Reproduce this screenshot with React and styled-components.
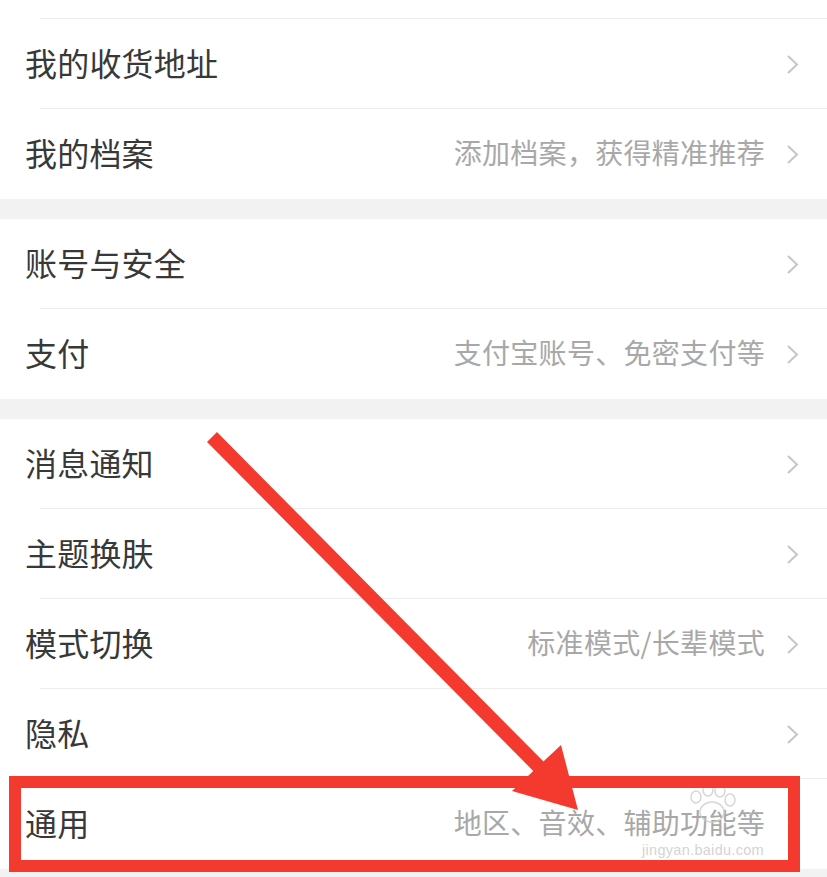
import React from "react";
import styled, { createGlobalStyle } from "styled-components";

const GlobalStyle = createGlobalStyle`
  html, body {
    margin: 0;
    padding: 0;
    background: #f2f2f2;
  }
  body {
    font-family: "Noto Sans CJK SC", "Noto Sans", sans-serif;
  }
`;

const Page = styled.div`
  position: relative;
  width: 827px;
  height: 877px;
  overflow: hidden;
  background: #f2f2f2;
  display: flex;
  flex-direction: column;
  gap: 20px;
`;

const Group = styled.div`
  background: #fff;
  display: flex;
  flex-direction: column;
`;

const TopStrip = styled.div`
  height: 18px;
  border-bottom: 1px solid #ececec;
  margin-left: 40px;
`;

const Row = styled.div`
  height: 90px;
  display: flex;
  align-items: center;
  padding: 0 28px 5px 25px;
  box-sizing: border-box;
  position: relative;

  &:not(:last-child)::after {
    content: "";
    position: absolute;
    left: 40px;
    right: 0;
    bottom: 0;
    height: 1px;
    background: #ececec;
  }
`;

const Label = styled.span`
  flex: 1;
  font-size: 32px;
  line-height: 1;
  color: #383838;
  letter-spacing: 0.2px;
`;

const Hint = styled.span`
  font-size: 28px;
  line-height: 1;
  color: #a8a8a8;
  margin-right: 21px;
  letter-spacing: 0.3px;
`;

const ChevronIcon = styled.svg`
  margin-top: 5px;
  flex-shrink: 0;
`;

const Chevron = () => (
  <ChevronIcon width="13" height="21" viewBox="0 0 13 21">
    <path d="M2 2 L11 10.5 L2 19" fill="none" stroke="#c6c6c6" strokeWidth="2" />
  </ChevronIcon>
);

const Overlay = styled.svg`
  position: absolute;
  left: 0;
  top: 0;
  pointer-events: none;
`;

const Watermark = styled.div`
  position: absolute;
  left: 642px;
  top: 843px;
  font-family: "Liberation Sans", sans-serif;
  font-size: 14.5px;
  line-height: 1;
  color: rgba(200, 200, 200, 0.8);
  letter-spacing: 0.3px;
`;

const GROUPS = [
  [
    { label: "我的收货地址" },
    { label: "我的档案", hint: "添加档案，获得精准推荐" },
  ],
  [
    { label: "账号与安全" },
    { label: "支付", hint: "支付宝账号、免密支付等" },
  ],
  [
    { label: "消息通知" },
    { label: "主题换肤" },
    { label: "模式切换", hint: "标准模式/长辈模式" },
    { label: "隐私" },
    { label: "通用", hint: "地区、音效、辅助功能等" },
  ],
];

export default function App() {
  return (
    <>
      <GlobalStyle />
      <Page>
        {GROUPS.map((rows, i) => (
          <Group key={i}>
            {i === 0 && <TopStrip />}
            {rows.map((r) => (
              <Row key={r.label}>
                <Label>{r.label}</Label>
                {r.hint && <Hint>{r.hint}</Hint>}
                <Chevron />
              </Row>
            ))}
          </Group>
        ))}

        <Watermark>jingyan.baidu.com</Watermark>

        <Overlay width="827" height="877" viewBox="0 0 827 877">
          {/* paw logo watermark */}
          <g fill="none" stroke="rgba(205,205,205,0.8)" strokeWidth="1.5">
            <ellipse cx="712" cy="812" rx="12" ry="10" />
            <ellipse cx="696" cy="797" rx="5" ry="6" />
            <ellipse cx="708" cy="790" rx="5" ry="6" />
            <ellipse cx="720" cy="791" rx="5" ry="6" />
            <ellipse cx="730" cy="800" rx="5" ry="6" />
          </g>
          <line x1="212" y1="437" x2="556" y2="784" stroke="#f43a2f" strokeWidth="14" />
          <polygon points="578,810 561,745 512,791" fill="#f43a2f" />
          <rect x="15" y="782" width="779" height="84" fill="none" stroke="#f43a2f" strokeWidth="12" />
        </Overlay>
      </Page>
    </>
  );
}
